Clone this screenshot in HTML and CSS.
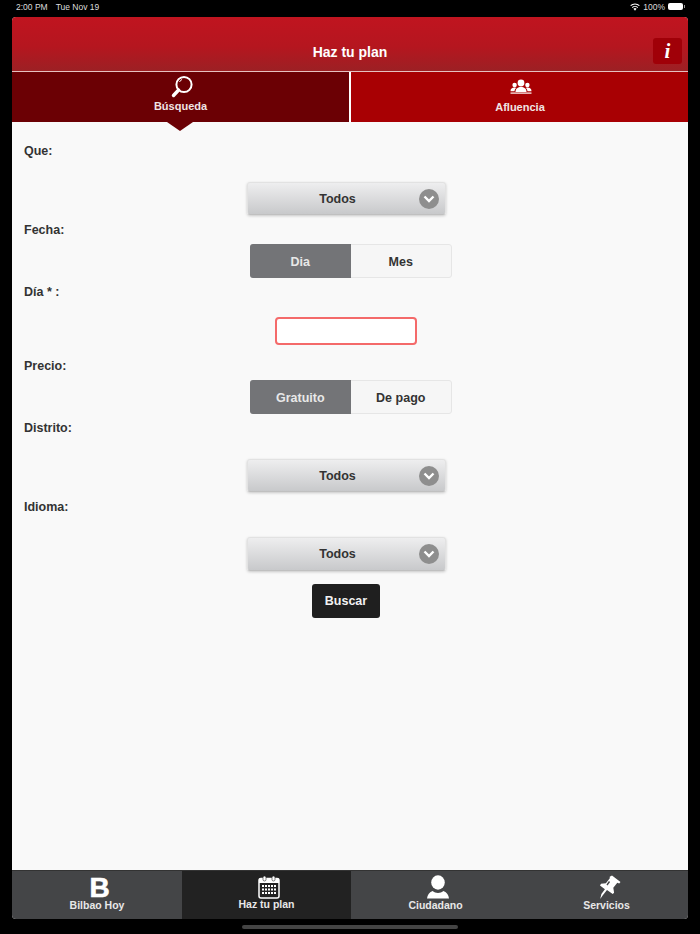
FILE: index.html
```html
<!DOCTYPE html>
<html lang="es">
<head>
  <meta charset="UTF-8" />
  <meta name="viewport" content="width=device-width, initial-scale=1.0"/>
  <title>Haz tu plan</title>
  <link rel="stylesheet" href="styles.css">
</head>
<body>
  <div class="status-bar">
    <div class="status-time"><span>2:00 PM</span><span>Tue Nov 19</span></div>
    <div class="status-right">
      <svg class="wifi" width="10" height="8" viewBox="0 0 11 8">
        <path d="M5.5 8 3.8 6a2.4 2.4 0 0 1 3.4 0z" fill="#fff"/>
        <path d="M2.5 4.6a4.3 4.3 0 0 1 6 0M.7 2.6a6.9 6.9 0 0 1 9.6 0" fill="none" stroke="#fff" stroke-width="1.2"/>
      </svg>
      <span>100%</span>
      <span class="battery"></span>
    </div>
  </div>

  <div class="app">
    <div class="app-header">
      <h1>Haz tu plan</h1>
      <span class="info-btn">i</span>
    </div>

    <div class="tabs">
      <div class="tab tab-active">
        <svg width="24" height="24" viewBox="0 0 24 24">
          <circle cx="14" cy="9.5" r="7.6" fill="none" stroke="#fff" stroke-width="2"/>
          <path d="M9.500 7a5 5 0 0 1 2.500-2.500" fill="none" stroke="#fff" stroke-width="1"/>
          <path d="M8.600 15 3.500 20.500" stroke="#fff" stroke-width="3.400" stroke-linecap="round"/>
        </svg>
        <span>Búsqueda</span>
      </div>
      <div class="tab tab-right">
        <svg width="24" height="24" viewBox="0 0 24 24">
          <circle cx="12" cy="8" r="3.400" fill="#fff"/>
          <circle cx="5.600" cy="10" r="2.200" fill="#fff"/>
          <circle cx="18.400" cy="10" r="2.200" fill="#fff"/>
          <path d="M6.500 17c0-3.600 2.500-5 5.500-5s5.500 1.400 5.500 5z" fill="#fff"/>
          <path d="M1.500 16.200c0-2.400 1.500-3.600 4-3.600.7 0 1.200.1 1.600.3-1 1-1.500 2-1.600 3.300zM22.500 16.200c0-2.400-1.500-3.600-4-3.600-.7 0-1.200.1-1.600.3 1 1 1.500 2 1.600 3.300z" fill="#fff"/>
          <rect x="1.500" y="17.500" width="21" height="1.200" fill="#fff"/>
        </svg>
        <span>Afluencia</span>
      </div>
    </div>

    <div class="content">
      <div class="label label-first">Que:</div>
      <div class="select"><span>Todos</span><i class="chevron"><svg width="12" height="8" viewBox="0 0 12 8"><path d="M1.500 1.500 6 6l4.500-4.500" fill="none" stroke="#fff" stroke-width="2.400"/></svg></i></div>

      <div class="label label-wide">Fecha:</div>
      <div class="segment"><span class="seg-on">Dia</span><span>Mes</span></div>

      <div class="label">Día * :</div>
      <input class="text-input" type="text">

      <div class="label label-after-input">Precio:</div>
      <div class="segment"><span class="seg-on">Gratuito</span><span>De pago</span></div>

      <div class="label">Distrito:</div>
      <div class="select"><span>Todos</span><i class="chevron"><svg width="12" height="8" viewBox="0 0 12 8"><path d="M1.500 1.500 6 6l4.500-4.500" fill="none" stroke="#fff" stroke-width="2.400"/></svg></i></div>

      <div class="label label-wide">Idioma:</div>
      <div class="select select-last"><span>Todos</span><i class="chevron"><svg width="12" height="8" viewBox="0 0 12 8"><path d="M1.500 1.500 6 6l4.500-4.500" fill="none" stroke="#fff" stroke-width="2.400"/></svg></i></div>

      <div class="search-btn">Buscar</div>
    </div>

    <div class="footer">
      <div class="foot-tab foot-first">
        <span class="foot-b">B</span>
        <span class="foot-label">Bilbao Hoy</span>
      </div>
      <div class="foot-tab foot-active">
        <svg width="24" height="24" viewBox="0 0 24 24">
          <rect x="2" y="3.500" width="20" height="19.500" rx="2" fill="none" stroke="#fff" stroke-width="1.500"/>
          <rect x="2" y="3.500" width="20" height="4.500" fill="#fff"/>
          <rect x="6" y="1" width="3" height="5" rx="1.500" fill="#fff" stroke="#222" stroke-width=".6"/>
          <rect x="15" y="1" width="3" height="5" rx="1.500" fill="#fff" stroke="#222" stroke-width=".6"/>
          <path d="M5 11h14M5 14.500h14M5 18h14" stroke="#fff" stroke-width="2" stroke-dasharray="2 1"/>
        </svg>
        <span class="foot-label">Haz tu plan</span>
      </div>
      <div class="foot-tab">
        <svg width="24" height="24" viewBox="0 0 24 24">
          <ellipse cx="12" cy="7.500" rx="6.800" ry="7.200" fill="#fff"/>
          <path d="M1 23.500c.5-3.500 2-6 5.500-7.500 1.500 1.300 3.500 2 5.500 2s4-.7 5.500-2c3.500 1.500 5 4 5.500 7.500z" fill="#fff"/>
        </svg>
        <span class="foot-label">Ciudadano</span>
      </div>
      <div class="foot-tab foot-last">
        <svg width="24" height="24" viewBox="0 0 24 24">
          <path d="M15 .5 23.500 7l-1.300 1.400-1.900-.6-4 5 .8 5-1.400 1.300-5.700-4.200L6 20l-2.800 4 1.200-5 3.500-4.800L3 10.500l1-1.700 4.900-.6 3.900-5-.1-1.500z" fill="#fff"/>
          <path d="M12.500 6.500 10 10" stroke="#444547" stroke-width="1.400"/>
        </svg>
        <span class="foot-label">Servicios</span>
      </div>
    </div>
  </div>

  <div class="home-indicator"></div>
</body>
</html>
```

FILE: styles.css
```css
body {
  font-family: "Liberation Sans", Arial, sans-serif;
  background-color: #000;
  margin: 0;
  height: 934px;
  display: flex;
  flex-direction: column;
  overflow: hidden;
}
.status-bar {
  height: 17px;
  padding: 0 15px 4px 16px;
  box-sizing: border-box;
  display: flex;
  justify-content: space-between;
  align-items: center;
  color: #ddd;
  font-size: 8.5px;
}
.status-time {
  display: flex;
  gap: 8px;
}
.status-right {
  display: flex;
  align-items: center;
  gap: 3px;
}
.battery {
  width: 15px;
  height: 7px;
  margin-right: 2px;
  background: #fff;
  border-radius: 2px;
  position: relative;
}
.battery::after {
  content: "";
  position: absolute;
  right: -2px;
  top: 2px;
  width: 1px;
  height: 3px;
  background: #999;
}
.app {
  flex: 1;
  margin: 0 12px;
  display: flex;
  flex-direction: column;
  border-radius: 4px;
  overflow: hidden;
  background: #f9f9f9;
}
.app-header {
  height: 55px;
  box-sizing: border-box;
  position: relative;
  display: flex;
  align-items: center;
  justify-content: center;
  background: linear-gradient(#c0141f, #b5161f 55%, #9c2024);
  border-bottom: 1px solid #e6c0c0;
}
.app-header h1 {
  margin: 16px 0 0;
  color: #fff;
  font-size: 14px;
  font-weight: bold;
}
.info-btn {
  position: absolute;
  right: 6px;
  top: 21px;
  width: 29px;
  height: 26px;
  background: #a00008;
  border-radius: 3px;
  color: #fff;
  font-family: "Liberation Serif", serif;
  font-style: italic;
  font-weight: bold;
  font-size: 21px;
  line-height: 26px;
  text-align: center;
}
.tabs {
  display: flex;
  height: 50px;
}
.tab {
  flex: 1;
  position: relative;
  display: flex;
  flex-direction: column;
  align-items: center;
  background: #a80003;
  color: #f0e4e4;
  font-size: 11px;
  font-weight: bold;
}
.tab svg {
  display: block;
  margin: 3px 0 0 3px;
}
.tab span {
  margin-top: 1px;
}
.tab-right span {
  margin: 2px 0 0 1px;
}
.tab-active {
  background: #6b0004;
  border-right: 2px solid #fff;
}
.tab-active::after {
  content: "";
  position: absolute;
  left: 155px;
  bottom: -9px;
  border-left: 13.5px solid transparent;
  border-right: 13.5px solid transparent;
  border-top: 9px solid #6b0004;
}
.content {
  flex: 1;
  padding: 21px 12px 0;
  display: flex;
  flex-direction: column;
  color: #333;
  font-size: 12.5px;
}
.label {
  height: 16px;
  line-height: 17px;
  margin-top: 6px;
  font-weight: bold;
}
.label-first {
  margin-top: 0;
}
.label-wide {
  margin-top: 7px;
}
.label-after-input {
  margin-top: 13px;
}
.select {
  width: 199px;
  height: 33px;
  margin: 23px 0 0 223px;
  position: relative;
  display: flex;
  align-items: center;
  padding-right: 18px;
  box-sizing: border-box;
  justify-content: center;
  background: linear-gradient(#eeeeef, #c8c9cb);
  border: 1px solid #e2e2e2;
  border-bottom-color: #c0c0c0;
  border-radius: 3px;
  box-shadow: 0 1px 3px rgba(0,0,0,0.2);
  font-weight: bold;
}
.select-last {
  height: 34px;
  margin-top: 22px;
}
.chevron {
  position: absolute;
  right: 6px;
  top: 6px;
  width: 20px;
  height: 20px;
  border-radius: 50%;
  background: #8e8e8e;
  display: flex;
  align-items: center;
  justify-content: center;
}
.segment {
  width: 202px;
  height: 34px;
  margin: 6px 0 0 226px;
  display: flex;
  box-sizing: border-box;
  border: 1px solid #e6e6e6;
  border-radius: 3px;
  background: #f6f6f6;
  font-weight: bold;
}
.segment span {
  flex: 1;
  display: flex;
  align-items: center;
  justify-content: center;
  padding-top: 1px;
}
.segment .seg-on {
  background: #737477;
  color: #e8e8e8;
  margin: -1px 0 -1px -1px;
  border-radius: 3px 0 0 3px;
}
.text-input {
  display: block;
  width: 142px;
  height: 28px;
  margin: 17px 0 0 251px;
  padding: 0;
  box-sizing: border-box;
  background: #fff;
  border: 2px solid #f46a6a;
  border-radius: 4px;
  outline: none;
}
.search-btn {
  width: 68px;
  height: 34px;
  margin: 13px 0 0 288px;
  background: #1f1f1f;
  color: #f2f2f2;
  border-radius: 3px;
  display: flex;
  align-items: center;
  justify-content: center;
  font-weight: bold;
}
.footer {
  height: 49px;
  border-top: 1px solid #333;
  box-sizing: border-box;
  display: flex;
  background: #444547;
}
.foot-tab {
  width: 169px;
  display: flex;
  flex-direction: column;
  align-items: center;
  color: #e8e8e8;
  font-size: 10.5px;
  font-weight: bold;
}
.foot-first {
  width: 170px;
}
.foot-last {
  width: 168px;
  padding-left: 5px;
  box-sizing: border-box;
}
.foot-tab svg {
  display: block;
  margin: 4px 0 0 5px;
  height: 24px;
}
.foot-active {
  background: #222;
}
.foot-active .foot-label {
  margin-top: -1px;
}
.foot-b {
  height: 24px;
  margin: 4px 0 0 5px;
  color: #fff;
  font-size: 28px;
  line-height: 25px;
  -webkit-text-stroke: 0.6px #fff;
}
.foot-label {
  line-height: 12px;
}
.home-indicator {
  width: 216px;
  height: 4px;
  margin: 6px auto 5px;
  border-radius: 2px;
  background: #444;
}
```
